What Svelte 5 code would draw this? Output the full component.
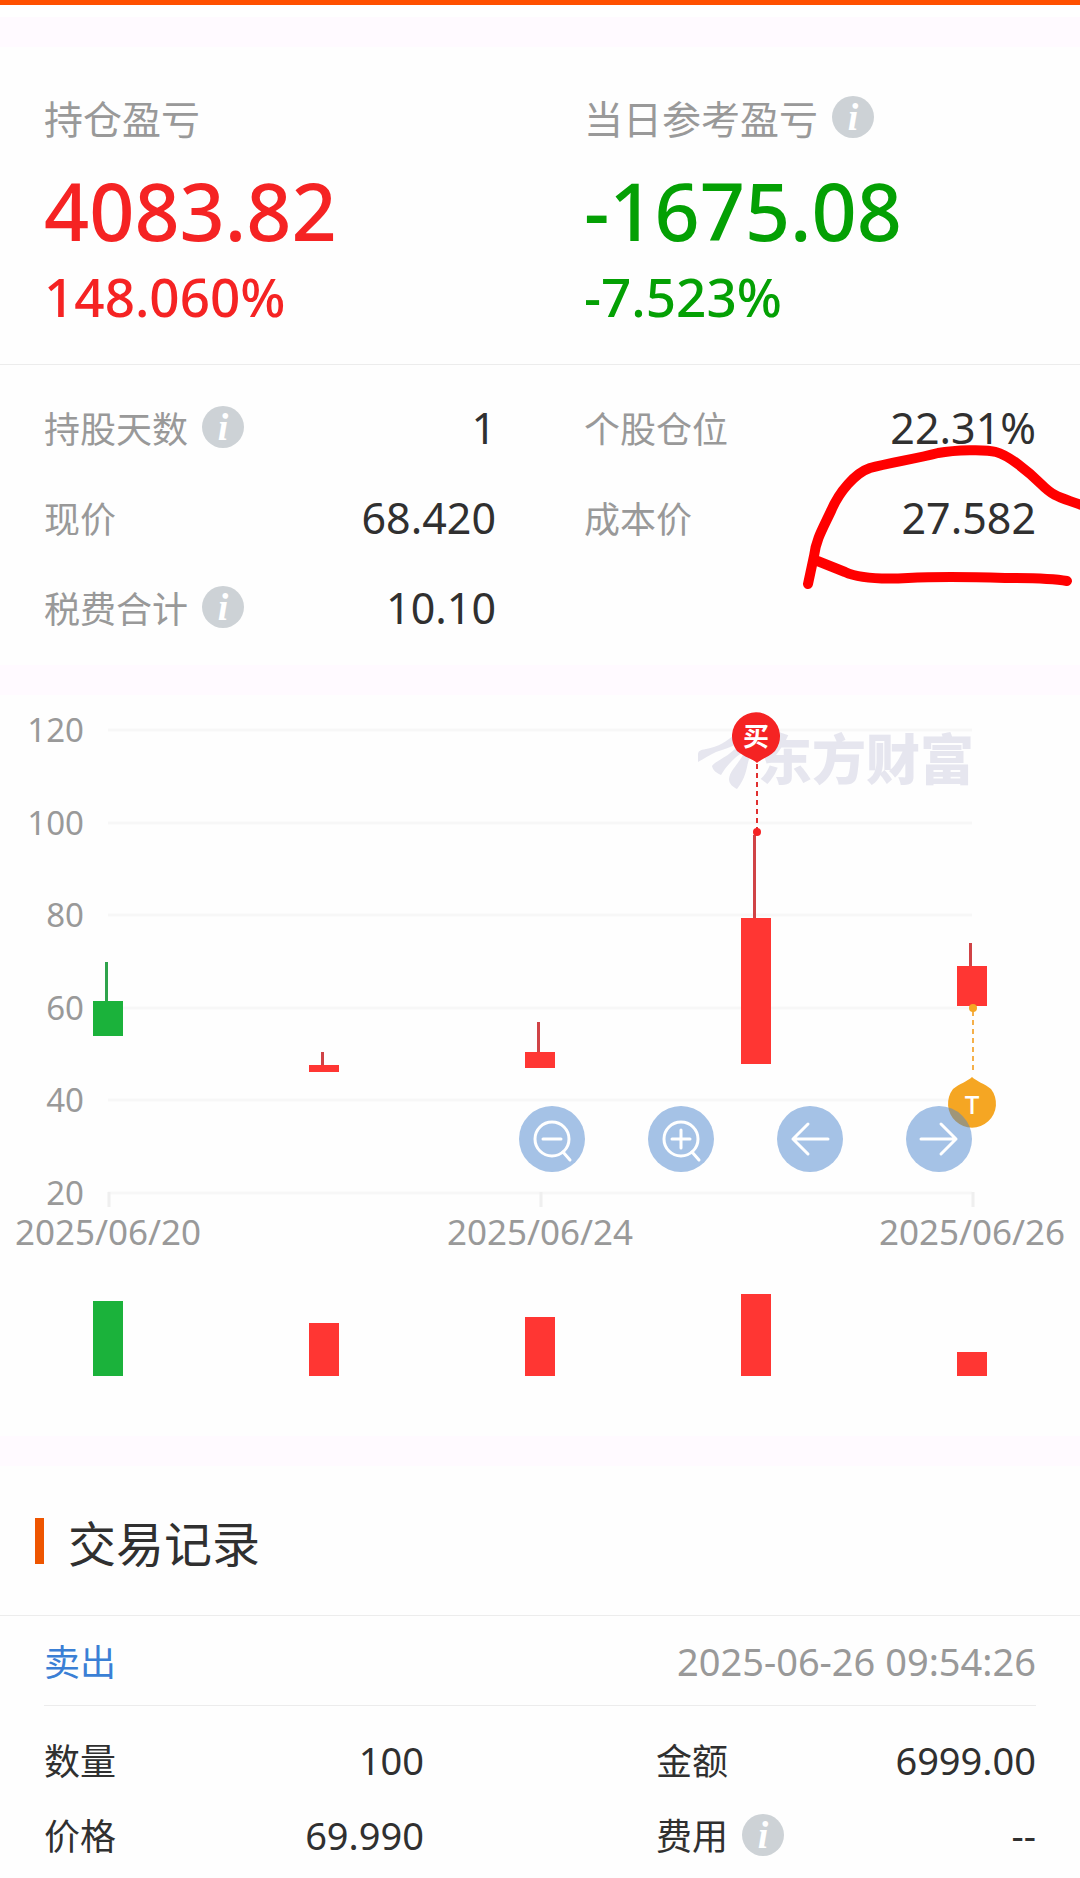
<script>
const summary = [
    { label: '持仓盈亏', value: '4083.82', percent: '148.060%', info: false },
    { label: '当日参考盈亏', value: '-1675.08', percent: '-7.523%', info: true }
]

const details = [
    { label: '持股天数', value: '1', info: true },
    { label: '个股仓位', value: '22.31%' },
    { label: '现价', value: '68.420' },
    { label: '成本价', value: '27.582' },
    { label: '税费合计', value: '10.10', info: true }
]

const trades = [
    {
        type: '卖出',
        time: '2025-06-26 09:54:26',
        fields: [
            { label: '数量', value: '100' },
            { label: '金额', value: '6999.00' },
            { label: '价格', value: '69.990' },
            { label: '费用', value: '--', info: true }
        ]
    }
]

const prices = [120, 100, 80, 60, 40, 20]
const dates = [
    { x: 108, text: '2025/06/20' },
    { x: 540, text: '2025/06/24' },
    { x: 972, text: '2025/06/26' }
]

// top / bottom of the candle body, high of the wick, height of the volume bar
const candles = [
    { up: false, high: 267, top: 306, bottom: 341, volume: 75 },
    { up: true, high: 357, top: 370, bottom: 377, volume: 53 },
    { up: true, high: 327, top: 357, bottom: 373, volume: 59 },
    { up: true, high: 140, top: 223, bottom: 369, volume: 82 },
    { up: true, high: 248, top: 271, bottom: 311, volume: 24 }
]

const priceY = (i) => 35 + Math.round(i * 92.6)
const candleX = (i) => 93 + i * 216

const controls = [
    { name: '缩小', icon: 'out' },
    { name: '放大', icon: 'in' },
    { name: '左移', icon: 'left' },
    { name: '右移', icon: 'right' }
]
</script>

{#snippet infoButton(label)}
<button class="info" type="button" aria-label="{label}说明">
    <svg viewBox="0 0 42 42" aria-hidden="true">
        <circle cx="21" cy="21" r="21" />
        <text x="21" y="34">i</text>
    </svg>
</button>
{/snippet}

<main>
    <section class="summary">
        {#each summary as item}
        <div class="profit" class:loss={item.value.startsWith('-')}>
            <h2>{item.label}{#if item.info}{@render infoButton(item.label)}{/if}</h2>
            <div class="amount">{item.value}</div>
            <div class="percent">{item.percent}</div>
        </div>
        {/each}
    </section>

    <section class="details">
        <dl>
            {#each details as item}
            <div class="row">
                <dt>{item.label}{#if item.info}{@render infoButton(item.label)}{/if}</dt>
                <dd>{item.value}</dd>
            </div>
            {/each}
        </dl>
        <svg class="scribble" viewBox="790 440 290 155" aria-hidden="true">
            <path d="M808 584 L814 556 C816 540 822 530 831 511 C839 492 855 473 870 468 C888 463 915 459 938 453 C955 450 986 449 996 452 C1008 455 1028 471 1041 484 C1055 498 1060 497 1084 506" />
            <path d="M815 560 L845 572 C860 579 890 579 908 578 C945 576 975 577 1005 578 C1030 578 1050 578 1067 581" />
        </svg>
    </section>

    <section class="chart">
        <svg viewBox="0 0 1080 741" role="img" aria-label="K线图">
            <g class="grid">
                {#each prices as price, i}
                <line x1="108" x2="972" y1={priceY(i)} y2={priceY(i)} />
                {/each}
            </g>
            <g class="ticks">
                {#each dates as date}
                <line x1={date.x + 1} x2={date.x + 1} y1="497" y2="512" />
                {/each}
            </g>
            <g class="watermark">
                <path d="M698 67 V60 C698 56 700 55 706 54 C718 52 728 46 736 38 L738 48 C732 52 724 54 716 57 C709 60 704 64 698 67 Z" />
                <path d="M712 71 C715 66 727 63 738 51 L743 57 C735 62 727 70 721 80 C717 78 713 76 712 71 Z" />
                <path d="M729 84 C730 75 738 70 744 58 L750 62 C746 70 748 80 737 94 C733 92 729 89 729 84 Z" />
                <text x="974" y="85">东方财富</text>
            </g>
            <g class="prices">
                {#each prices as price, i}
                <text x="84" y={priceY(i) + 12}>{price}</text>
                {/each}
            </g>
            <g class="dates">
                {#each dates as date}
                <text x={date.x} y="550">{date.text}</text>
                {/each}
            </g>
            {#each candles as c, i}
            <g class="candle" class:up={c.up}>
                <rect class="wick" x={candleX(i) + 12} y={c.high} width="3" height={c.top - c.high} />
                <rect x={candleX(i)} y={c.top} width="30" height={c.bottom - c.top} />
                <rect x={candleX(i)} y={681 - c.volume} width="30" height={c.volume} />
            </g>
            {/each}
            <g class="pin buy">
                <line x1="757" x2="757" y1="69" y2="134" />
                <circle cx="757" cy="137" r="4" />
                <path d="M757 68 C753 64 744 62 737 56 A24 24 0 1 1 775 56 C769 62 761 64 757 68 Z" />
                <text class="bold" x="756" y="51">买</text>
            </g>
            <g class="pin t">
                <line x1="973" x2="973" y1="316" y2="378" />
                <circle cx="973" cy="313" r="4" />
                <path d="M972 382 C976 386 985 389 991 394 A24 24 0 1 1 953 394 C959 389 968 386 972 382 Z" />
                <text x="972" y="419">T</text>
            </g>
        </svg>
        <div class="controls">
            {#each controls as control}
            <button type="button" aria-label={control.name}>
                <svg viewBox="0 0 66 66" aria-hidden="true">
                    {#if control.icon === 'out' || control.icon === 'in'}
                    <circle cx="33" cy="33" r="17" />
                    <path d="M44 46 L51 54 M24 33 H42" />
                    {#if control.icon === 'in'}<path d="M33 24 V42" />{/if}
                    {:else if control.icon === 'left'}
                    <path d="M51 33 H16 M31 18 L16 33 L31 48" />
                    {:else}
                    <path d="M15 33 H50 M35 18 L50 33 L35 48" />
                    {/if}
                </svg>
            </button>
            {/each}
        </div>
    </section>

    <section class="trades">
        <h1>交易记录</h1>
        {#each trades as trade}
        <article>
            <header>
                <span class="type">{trade.type}</span>
                <time>{trade.time}</time>
            </header>
            <dl>
                {#each trade.fields as item}
                <div class="row">
                    <dt>{item.label}{#if item.info}{@render infoButton(item.label)}{/if}</dt>
                    <dd>{item.value}</dd>
                </div>
                {/each}
            </dl>
        </article>
        {/each}
    </section>
</main>

<style>
:global(body) {
    margin: 0;
    background: #fefefe;
}
main {
    display: flex;
    flex-direction: column;
    gap: 30px;
    border-top: 5px solid #ff5000;
    background: #fffaff;
    font-family: "Noto Sans", "Noto Sans CJK SC", sans-serif;
    color: #303030;
    overflow: hidden;
}
main::before {
    content: "";
    height: 12px;
    background: #fff;
}
section {
    background: #fefefe;
}
h1, h2, dl, dd {
    margin: 0;
    font-weight: 400;
}
button {
    border: none;
    padding: 0;
    cursor: pointer;
}
.info {
    width: 42px;
    height: 42px;
    margin-left: 14px;
    background: none;
}
.info svg {
    display: block;
}
.info circle {
    fill: #cdd2d6;
}
.info text {
    fill: #fff;
    font: italic bold 38px "Liberation Serif", serif;
    text-anchor: middle;
}
.summary {
    display: grid;
    grid-template-columns: 1fr 1fr;
    padding: 42px 0 37px;
    border-bottom: 1px solid #ececec;
}
.profit {
    padding-left: 44px;
    color: #f52323;
}
.profit.loss {
    color: #04a004;
}
h2 {
    display: flex;
    align-items: center;
    height: 56px;
    font-size: 39px;
    color: #999;
}
.amount {
    font-size: 79px;
    line-height: 132px;
    height: 122px;
    font-weight: 500;
}
.percent {
    font-size: 53px;
    line-height: 60px;
    font-weight: 500;
}
.details {
    position: relative;
    margin-top: -30px;
    padding: 17px 0 13px;
}
.details dl {
    display: grid;
    grid-template-columns: 1fr 1fr;
}
.row {
    display: flex;
    align-items: center;
    justify-content: space-between;
}
.details .row {
    height: 90px;
    padding: 0 44px;
}
dt {
    display: flex;
    align-items: center;
    font-size: 36px;
}
.details dt {
    color: #999;
}
.details dd {
    font-size: 43px;
}
.scribble {
    position: absolute;
    top: 75px;
    right: 0;
    width: 290px;
    pointer-events: none;
}
.scribble path {
    fill: none;
    stroke: #f00;
    stroke-width: 10;
    stroke-linecap: round;
    stroke-linejoin: round;
}
.chart {
    position: relative;
}
.chart > svg {
    display: block;
    width: 100%;
}
.grid line {
    stroke: #f7f7f7;
    stroke-width: 3;
}
.ticks line {
    stroke: #efefef;
    stroke-width: 3;
}
.watermark {
    fill: #e6e6ef;
}
.watermark text {
    font-size: 54px;
    font-weight: 900;
    text-anchor: end;
}
.prices text, .dates text {
    fill: #999;
    font-size: 33px;
    text-anchor: end;
}
.dates text {
    font-size: 35px;
    text-anchor: middle;
}
.candle {
    fill: #1bb23b;
}
.candle .wick {
    fill: #2fa34c;
}
.candle.up {
    fill: #ff3633;
}
.candle.up .wick {
    fill: #d04346;
}
.pin line {
    stroke-width: 2;
    stroke-dasharray: 5 4;
}
.pin text {
    fill: #fff;
    font-size: 26px;
    font-weight: 500;
    text-anchor: middle;
}
.pin .bold {
    font-weight: 700;
}
.buy {
    fill: #f52323;
}
.buy line {
    stroke: #e03030;
}
.t {
    fill: #f5a623;
}
.t line {
    stroke: #f5b04a;
}
.controls {
    position: absolute;
    top: 55.5%;
    right: 10%;
    display: flex;
    gap: 63px;
}
.controls button {
    width: 66px;
    height: 66px;
    border-radius: 50%;
    background: rgba(75, 133, 205, 0.5);
}
.controls svg {
    display: block;
    fill: none;
    stroke: #fff;
    stroke-width: 3;
    stroke-linecap: round;
    stroke-linejoin: round;
}
h1 {
    display: flex;
    align-items: center;
    height: 149px;
    padding-left: 35px;
    border-bottom: 1px solid #ececec;
    font-size: 48px;
}
h1::before {
    content: "";
    width: 9px;
    height: 46px;
    margin-right: 24px;
    background: #ee5500;
}
article {
    padding: 0 44px 5px;
}
header {
    display: flex;
    align-items: center;
    justify-content: space-between;
    height: 89px;
    border-bottom: 1px solid #ececec;
}
.type {
    font-size: 36px;
    color: #3a7fd5;
}
time {
    font-size: 38px;
    color: #999;
}
article dl {
    display: grid;
    grid-template-columns: 1fr 1fr;
    column-gap: 232px;
    padding-top: 16px;
}
article .row {
    height: 75px;
}
article dd {
    font-size: 38px;
}
</style>
